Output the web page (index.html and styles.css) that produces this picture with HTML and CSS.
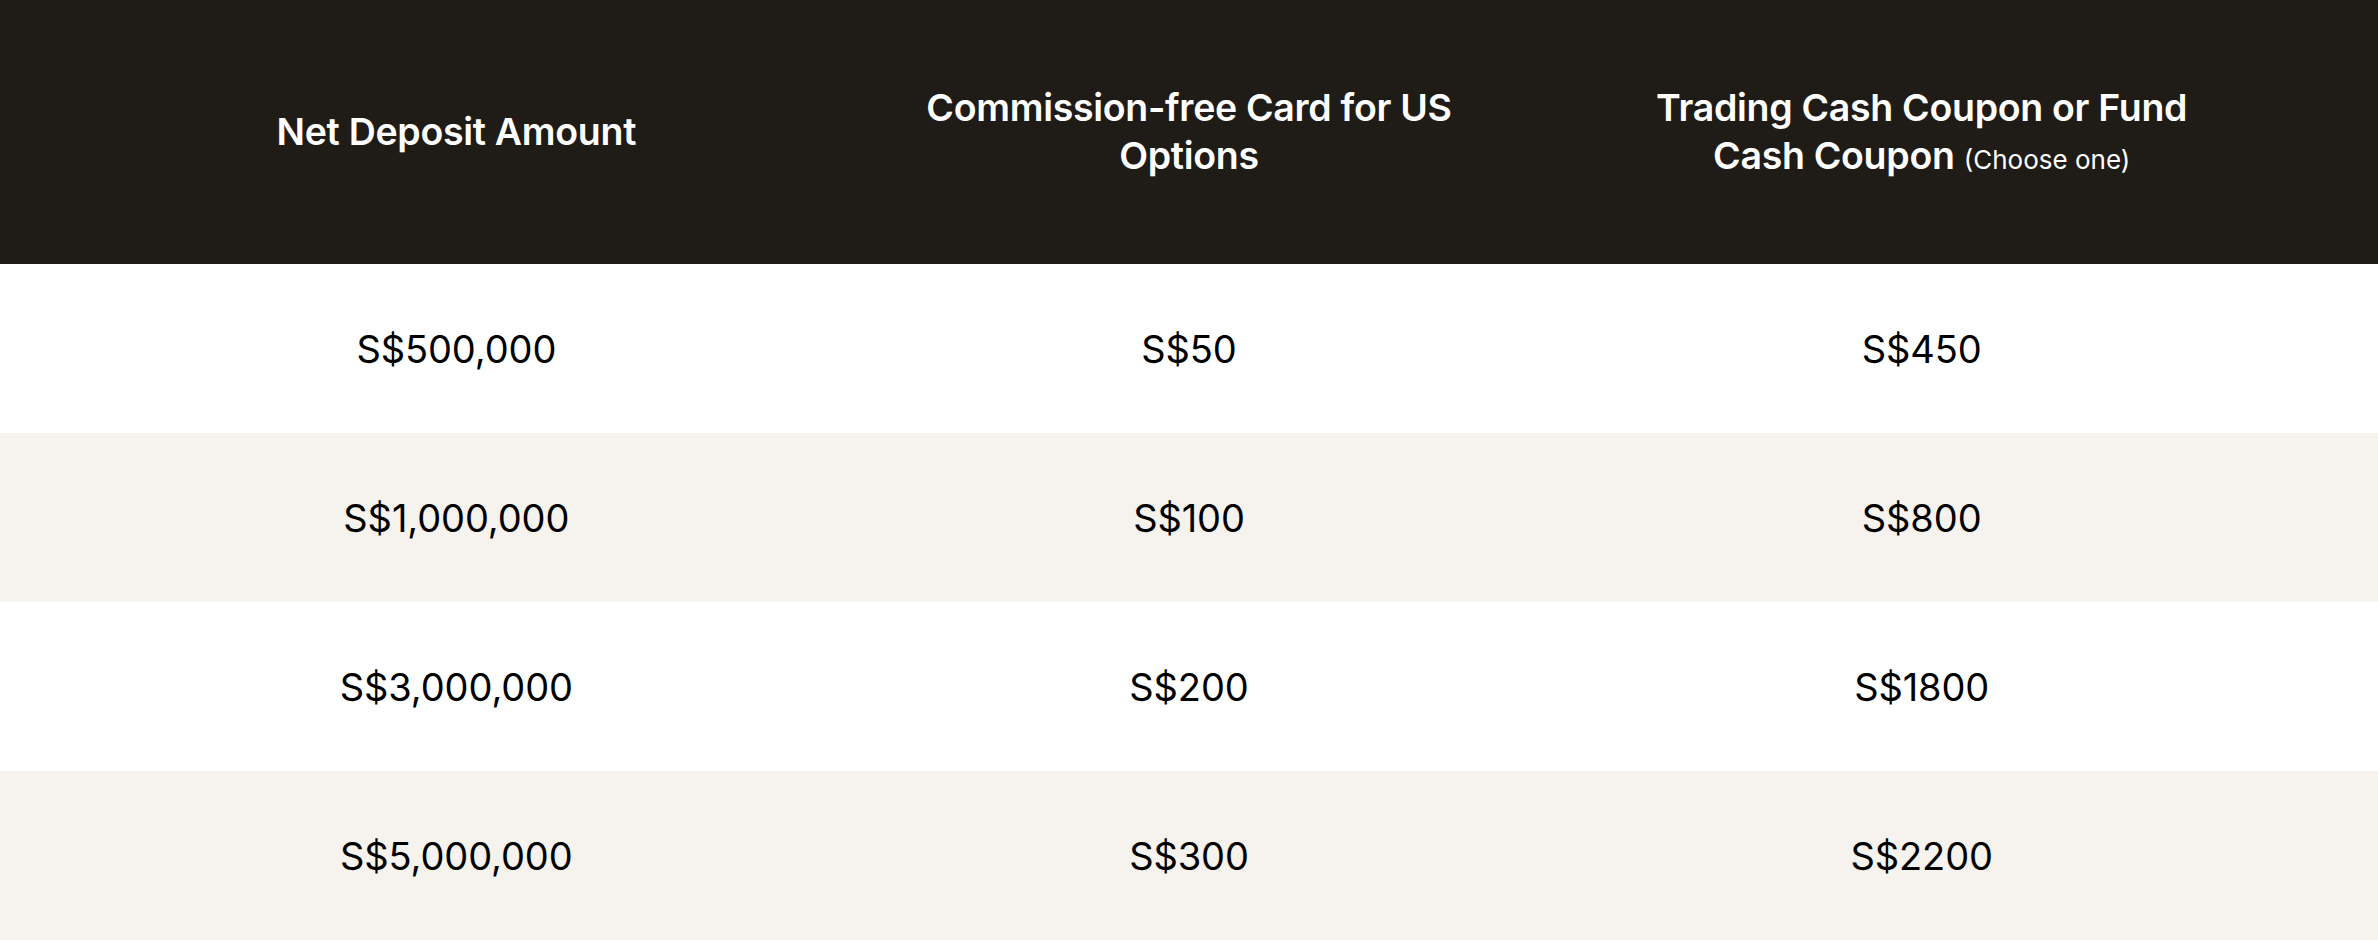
FILE: index.html
```html
<!DOCTYPE html>
<html lang="en">
<head>
<meta charset="utf-8">
<title>Deposit Rewards</title>
<link rel="stylesheet" href="styles.css">
</head>
<body>
<div class="table">
  <div class="row head">
    <div class="cell">Net Deposit Amount</div>
    <div class="cell">Commission-free Card for US Options</div>
    <div class="cell">Trading Cash Coupon or Fund Cash Coupon <span class="note">(Choose one)</span></div>
  </div>
  <div class="row">
    <div class="cell">S$500,000</div>
    <div class="cell">S$50</div>
    <div class="cell">S$450</div>
  </div>
  <div class="row alt">
    <div class="cell">S$1,000,000</div>
    <div class="cell">S$100</div>
    <div class="cell">S$800</div>
  </div>
  <div class="row">
    <div class="cell">S$3,000,000</div>
    <div class="cell">S$200</div>
    <div class="cell">S$1800</div>
  </div>
  <div class="row alt">
    <div class="cell">S$5,000,000</div>
    <div class="cell">S$300</div>
    <div class="cell">S$2200</div>
  </div>
</div>
</body>
</html>
```
FILE: styles.css
```css
html, body {
  margin: 0;
  padding: 0;
  background: #ffffff;
}
body {
  font-family: Inter, "Noto Sans", sans-serif;
  color: #000000;
}
.table {
  display: flex;
  flex-direction: column;
  width: 100%;
}
.row {
  display: grid;
  grid-template-columns: repeat(3, 1fr);
  padding: 0 90px;
  height: 169px;
  align-items: center;
  background: #ffffff;
}
.row.alt {
  background: #f6f2ee;
}
.row.head {
  height: 264px;
  background: #1f1b16;
  color: #ffffff;
}
.cell {
  text-align: center;
  padding: 0 80px;
  font-size: 38px;
  font-weight: 400;
  letter-spacing: -0.1px;
}
.head .cell {
  font-weight: 600;
  font-size: 37.5px;
  line-height: 48px;
  letter-spacing: -0.3px;
}
.head .note {
  font-size: 26px;
  font-weight: 400;
  letter-spacing: 0;
  line-height: 1;
}
```
